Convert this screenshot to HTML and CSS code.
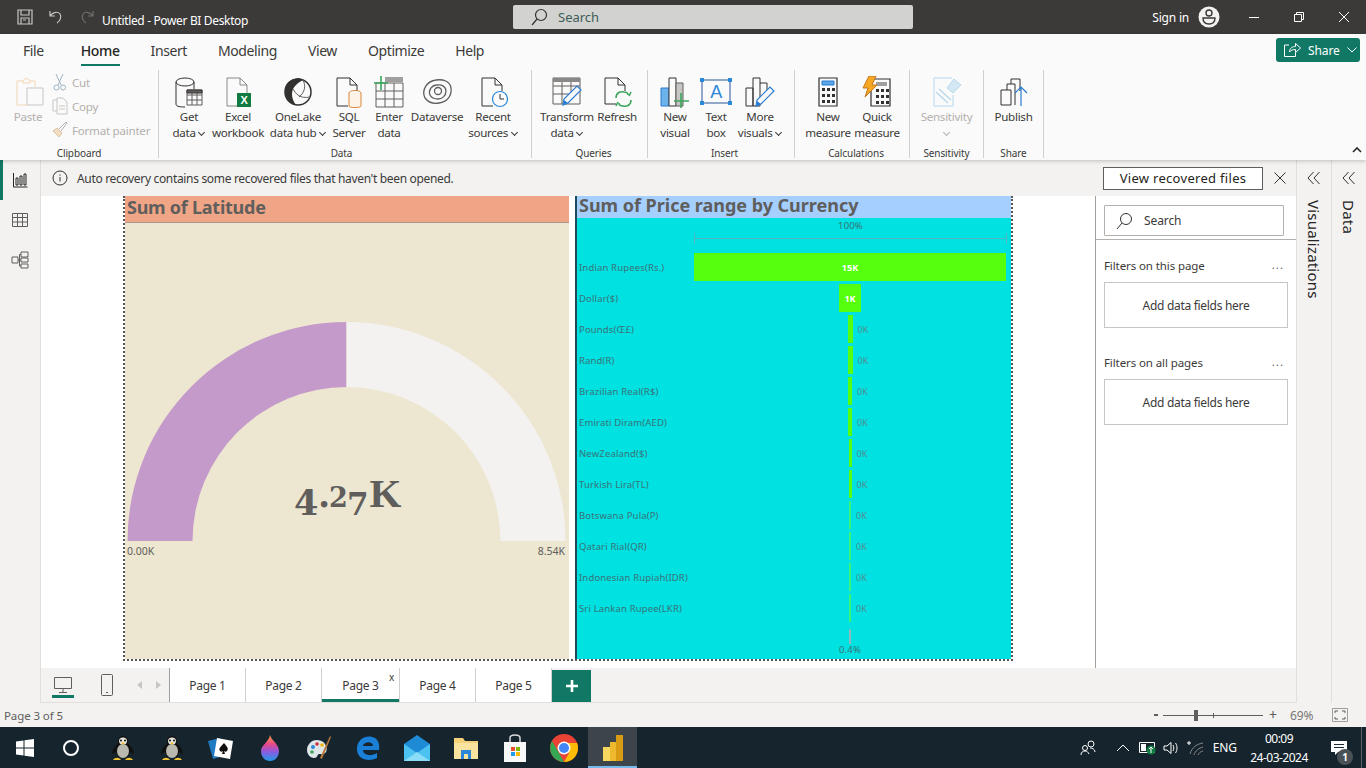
FILE: index.html
```html
<!DOCTYPE html>
<html lang="en">
<head>
    <meta charset="UTF-8">
    <meta name="viewport" content="width=device-width, initial-scale=1.0">
    <title>Untitled - Power BI Desktop</title>
    <link rel="stylesheet" href="styles.css">
</head>
<body>
    <!-- Title bar -->
    <header class="titlebar">
        <div class="quick-icons">
            <svg width="18" height="18" viewBox="0 0 18 18" fill="none" stroke="#c8c6c4" stroke-width="1.2"><path d="M2 2h14v14H2zM5 2v5h8V2M5 16v-6h8v6M7 12h3"/></svg>
            <svg width="18" height="18" viewBox="0 0 18 18" fill="none" stroke="#c8c6c4" stroke-width="1.2"><path d="M3 3v5h5M3 8c3-4 8-5 10-2 2 3 0 7-3 9"/></svg>
            <svg width="18" height="18" viewBox="0 0 18 18" fill="none" stroke="#6f6e6d" stroke-width="1.2"><path d="M15 3v5h-5M15 8c-3-4-8-5-10-2-2 3 0 7 3 9"/></svg>
        </div>
        <span class="doc-title">Untitled - Power BI Desktop</span>
        <div class="title-search">
            <svg width="18" height="18" viewBox="0 0 18 18" fill="none" stroke="#323130" stroke-width="1.2"><circle cx="11" cy="7" r="5.5"/><path d="M7 11l-5 6"/></svg>
            <span>Search</span>
        </div>
        <div class="title-right">
            <span class="sign-in">Sign in</span>
            <svg class="avatar" width="22" height="22" viewBox="0 0 22 22"><circle cx="11" cy="11" r="10.5" fill="#f3f2f1"/><circle cx="11" cy="7" r="3" fill="none" stroke="#3b3a39" stroke-width="1.4"/><path d="M5 12h12c0 4-2.5 6-6 6s-6-2-6-6z" fill="none" stroke="#3b3a39" stroke-width="1.4"/></svg>
            <div class="win-btn"><svg width="12" height="12" viewBox="0 0 12 12" stroke="#fff"><path d="M1 6.500h10"/></svg></div>
            <div class="win-btn"><svg width="12" height="12" viewBox="0 0 12 12" fill="none" stroke="#fff"><path d="M1.500 3.500h7v7h-7zM3.500 3.500v-2h7v7h-2"/></svg></div>
            <div class="win-btn"><svg width="12" height="12" viewBox="0 0 12 12" stroke="#fff"><path d="M1 1l10 10M11 1L1 11"/></svg></div>
        </div>
    </header>

    <!-- Ribbon -->
    <section class="ribbon">
        <nav class="ribbon-tabs">
            <span class="tab tab-file">File</span>
            <span class="tab tab-active">Home</span>
            <span class="tab">Insert</span>
            <span class="tab">Modeling</span>
            <span class="tab">View</span>
            <span class="tab">Optimize</span>
            <span class="tab">Help</span>
            <div class="share-btn">
                <svg width="18" height="16" viewBox="0 0 18 16" fill="none" stroke="#fff"><path d="M6 3H1.500v11.500h11V11M6.500 10c0-4 3-5.500 6-5.500V1.500l5 4.500-5 4.500V7.500c-2.500 0-4.500.5-6 2.500z"/></svg>
                <span>Share</span>
                <svg width="10" height="6" viewBox="0 0 10 6" fill="none" stroke="#fff"><path d="M.5.500L5 5l4.500-4.500"/></svg>
            </div>
        </nav>
        <div class="ribbon-groups">
            <div class="group group-clipboard">
                <div class="clipboard">
                    <div class="rb-btn paste disabled">
                        <svg width="32" height="32" viewBox="0 0 32 32" fill="none"><path d="M8 5H2v24h10" stroke="#f3d6b3"/><path d="M8 5c0-2 2-1 3-3 1 2 4 1 4 3v2H8zM15 5h5v6" stroke="#f3d6b3"/><path d="M12 12h16v17H12z" stroke="#c8c6c4" fill="#fafafa"/></svg>
                        <span>Paste</span>
                    </div>
                    <div class="small-list disabled">
                        <div class="small-btn"><svg width="16" height="18" viewBox="0 0 16 18" fill="none" stroke="#9fb4c4"><path d="M4 1l5 11M11 1L6 12"/><circle cx="4.500" cy="14.500" r="2.500"/><circle cx="11" cy="14.500" r="2.500"/></svg><span>Cut</span></div>
                        <div class="small-btn"><svg width="16" height="18" viewBox="0 0 16 18" fill="none" stroke="#c8c6c4"><path d="M5 3H1v11h4M5 1h6l4 4v12H5zM7 9h6M7 12h6"/></svg><span>Copy</span></div>
                        <div class="small-btn"><svg width="16" height="18" viewBox="0 0 16 18" fill="none"><path d="M1 10l6 6 3-4-5-5z" fill="#f4dcc0" stroke="#d8c4a8"/><path d="M7 8l7-7 1 1-6 8" stroke="#b3b0ad"/></svg><span>Format painter</span></div>
                    </div>
                </div>
                <div class="group-label">Clipboard</div>
            </div>

            <div class="group group-data">
                <div class="btn-grid">
                    <div class="rb-btn">
                        <svg width="30" height="32" viewBox="0 0 30 32" fill="none" stroke="#323130"><ellipse cx="11" cy="6" rx="9" ry="4"/><path d="M2 6v22c0 2 2 3 9 3M20 6v7"/><path d="M13 14h15v15H13zM13 19h15M13 24h15M18 14v15M23 14v15" stroke="#605e5c"/><path d="M13 14h15v3H13z" fill="#605e5c"/></svg>
                        <span>Get<br>data <i class="caret"></i></span>
                    </div>
                    <div class="rb-btn">
                        <svg width="30" height="32" viewBox="0 0 30 32" fill="none"><path d="M4 2h13l7 7v21H4zM17 2v7h7" stroke="#8a8886"/><path d="M14 17h14v14H14z" fill="#107c41"/><text x="21" y="28" class="svg-x">X</text></svg>
                        <span>Excel<br>workbook</span>
                    </div>
                    <div class="rb-btn">
                        <svg width="32" height="32" viewBox="0 0 32 32" fill="none"><circle cx="16" cy="16" r="13" stroke="#323130" stroke-width="1.500"/><path d="M13 3C6 4 2 10 3 17c1 7 6 11 11 12-4-5-5-11-3-16 2-4 6-7 10-9-3-2-6-2-8-1z" fill="#323130"/><path d="M11 13c3 5 7 10 17 8M21 4c3 6 2 12-4 17" stroke="#605e5c"/></svg>
                        <span>OneLake<br>data hub <i class="caret"></i></span>
                    </div>
                    <div class="rb-btn">
                        <svg width="30" height="32" viewBox="0 0 30 32" fill="none"><path d="M3 2h13l7 7v6M3 2v28h11M16 2v7h7" stroke="#323130"/><ellipse cx="21" cy="17" rx="6" ry="2.500" stroke="#d8893a"/><path d="M15 17v13c0 2 12 2 12 0V17" stroke="#d8893a" fill="#fdf3e7"/></svg>
                        <span>SQL<br>Server</span>
                    </div>
                    <div class="rb-btn">
                        <svg width="32" height="32" viewBox="0 0 32 32" fill="none"><path d="M3 7h27v24H3zM3 15h27M3 23h27M12 7v24M21 7v24" stroke="#605e5c"/><path d="M12 1h18v5H12z" fill="#a19f9d"/><path d="M8 0v14M1 7h14" stroke="#3ba55c" stroke-width="1.600"/></svg>
                        <span>Enter<br>data</span>
                    </div>
                    <div class="rb-btn">
                        <svg width="32" height="32" viewBox="0 0 32 32" fill="none" stroke="#605e5c" stroke-width="1.300"><path d="M4 22C0 14 6 5 15 4c7-1 14 1 15 8 1 8-4 14-12 15-6 1-11-1-14-5z"/><path d="M9 19c-2-5 2-10 7-10 5-1 9 2 9 6 0 5-4 8-8 8-4 0-7-2-8-4z"/><circle cx="17" cy="15" r="3.500"/></svg>
                        <span>Dataverse</span>
                    </div>
                    <div class="rb-btn">
                        <svg width="30" height="32" viewBox="0 0 30 32" fill="none"><path d="M4 2h13l7 7v6M4 2v28h11M17 2v7h7" stroke="#323130"/><circle cx="22" cy="23" r="7.500" fill="#fafafa" stroke="#2b88d8" stroke-width="1.200"/><path d="M22 18v5h4" stroke="#323130"/></svg>
                        <span>Recent<br>sources <i class="caret"></i></span>
                    </div>
                </div>
                <div class="group-label label-data">Data</div>
            </div>

            <div class="group group-queries">
                <div class="btn-grid">
                    <div class="rb-btn">
                        <svg width="32" height="32" viewBox="0 0 32 32" fill="none"><path d="M2 2h27v26H2zM2 10h27M2 18h20M11 2v26M20 2v18" stroke="#605e5c"/><path d="M2 2h27v4H2z" fill="#8a8886"/><path d="M12 29l1-6L26 10l4 4-13 13z" fill="#fafafa" stroke="#2b7cd3" stroke-width="1.200"/><path d="M12 29l1-5 4 3z" fill="#2b7cd3"/></svg>
                        <span>Transform<br>data <i class="caret"></i></span>
                    </div>
                    <div class="rb-btn">
                        <svg width="30" height="32" viewBox="0 0 30 32" fill="none"><path d="M3 2h13l7 7v6M3 2v26h11M16 2v7h7" stroke="#323130"/><path d="M14 22c0-5 4-7 8-6 2 0 4 1 4 3M29 24c0 5-4 7-8 6-2 0-4-1-4-3" stroke="#3ba55c" stroke-width="1.600"/><path d="M27 20l2-4M16 26l-2 4" stroke="#3ba55c" stroke-width="1.600"/></svg>
                        <span>Refresh</span>
                    </div>
                </div>
                <div class="group-label">Queries</div>
            </div>

            <div class="group group-insert">
                <div class="btn-grid">
                    <div class="rb-btn">
                        <svg width="32" height="32" viewBox="0 0 32 32" fill="none"><path d="M2 12h8v18H2z" fill="#6cb2eb" stroke="#2b7cd3"/><path d="M10 2h7v28h-7z" stroke="#323130" fill="#fafafa"/><path d="M17 7h7v23h-7z" fill="#c8c6c4" stroke="#605e5c"/><path d="M22 17v15M15 25h15" stroke="#3ba55c" stroke-width="1.600"/></svg>
                        <span>New<br>visual</span>
                    </div>
                    <div class="rb-btn">
                        <svg width="34" height="32" viewBox="0 0 34 32" fill="none"><path d="M3 4h28v23H3z" stroke="#2b579a"/><path d="M1 2h4v4H1zM29 2h4v4h-4zM1 25h4v4H1zM29 25h4v4h-4z" fill="#2b88d8"/><text x="17" y="22" class="svg-a">A</text></svg>
                        <span>Text<br>box</span>
                    </div>
                    <div class="rb-btn">
                        <svg width="32" height="32" viewBox="0 0 32 32" fill="none"><path d="M2 12h7v18H2zM9 2h7v28H9zM16 7h7v10" stroke="#323130"/><path d="M12 30l1-6L26 11l4 4-13 13z" fill="#fafafa" stroke="#2b7cd3" stroke-width="1.200"/><path d="M12 30l1-5 4 3z" fill="#2b7cd3"/></svg>
                        <span>More<br>visuals <i class="caret"></i></span>
                    </div>
                </div>
                <div class="group-label">Insert</div>
            </div>

            <div class="group group-calc">
                <div class="btn-grid">
                    <div class="rb-btn">
                        <svg width="24" height="32" viewBox="0 0 24 32" fill="none"><path d="M3 2h18v28H3z" stroke="#323130" stroke-width="1.200"/><path d="M6 5h12v4H6z" fill="#5ba6e6" stroke="#2b7cd3"/><path d="M6 12h3v3H6zM11 12h3v3h-3zM16 12h3v3h-3zM6 18h3v3H6zM11 18h3v3h-3zM16 18h3v3h-3zM6 24h3v3H6zM11 24h3v3h-3zM16 24h3v3h-3z" fill="#323130"/></svg>
                        <span>New<br>measure</span>
                    </div>
                    <div class="rb-btn">
                        <svg width="30" height="32" viewBox="0 0 30 32" fill="none"><path d="M9 3h19v27H9z" stroke="#323130" stroke-width="1.200"/><path d="M14 6h11v4H14z" fill="#a19f9d"/><path d="M14 13h3v3h-3zM19 13h3v3h-3zM24 13h3v3h-3zM14 19h3v3h-3zM19 19h3v3h-3zM24 19h3v3h-3zM14 25h3v3h-3zM19 25h3v3h-3zM24 25h3v3h-3z" fill="#323130"/><path d="M7 0h7l-4 9h5L3 21l3-9H1z" fill="#f7a823" stroke="#c2761b"/></svg>
                        <span>Quick<br>measure</span>
                    </div>
                </div>
                <div class="group-label">Calculations</div>
            </div>

            <div class="group group-sens">
                <div class="btn-grid">
                    <div class="rb-btn disabled">
                        <svg width="32" height="32" viewBox="0 0 32 32" fill="none" stroke="#b8d8ec"><path d="M3 2h18M3 2v28h19V19"/><path d="M5 16L17 27M8 13l12 11" stroke-width="1.500"/><path d="M16 12l7-9 7 6-8 8z" fill="#d4e8f4"/></svg>
                        <span>Sensitivity<br><i class="caret"></i></span>
                    </div>
                </div>
                <div class="group-label">Sensitivity</div>
            </div>

            <div class="group group-share">
                <div class="btn-grid">
                    <div class="rb-btn">
                        <svg width="32" height="32" viewBox="0 0 32 32" fill="none"><path d="M3 14h10v15H3zM9 14V8h8v21M17 4v0M13 8V3h9v12" stroke="#323130" stroke-linejoin="round"/><path d="M23 30V11M17 17l6-6 6 6" stroke="#2b7cd3" stroke-width="1.200"/></svg>
                        <span>Publish</span>
                    </div>
                </div>
                <div class="group-label">Share</div>
            </div>
        </div>
        <svg class="ribbon-collapse" width="10" height="6" viewBox="0 0 10 6" fill="none" stroke="#252423" stroke-width="1.600"><path d="M1 5l4-4 4 4"/></svg>
    </section>

    <!-- Main area -->
    <div class="middle">
        <aside class="rail">
            <div class="rail-item rail-active">
                <svg width="16" height="16" viewBox="0 0 16 16" fill="none" stroke="#252423"><path d="M1.500 1v14h14M4 13V6h2v7zM8 13V4h2v9zM12 13V2h2v11z"/></svg>
            </div>
            <div class="rail-item">
                <svg width="18" height="16" viewBox="0 0 18 16" fill="none" stroke="#605e5c"><path d="M1.500 1.500h15v13h-15zM1.500 5.500h15M1.500 10h15M6.500 1.500v13M11.500 1.500v13"/></svg>
            </div>
            <div class="rail-item">
                <svg width="18" height="18" viewBox="0 0 18 18" fill="none" stroke="#605e5c"><path d="M1 6h6v6H1zM10 1h7v5h-7zM10 7h7v4h-7zM10 13h7v4h-7zM7 9h3M8.500 3.500h1.500M8.500 3.500V15H10"/></svg>
            </div>
        </aside>

        <div class="center">
            <div class="message-bar">
                <svg width="16" height="16" viewBox="0 0 16 16" fill="none" stroke="#323130"><circle cx="8" cy="8" r="7"/><path d="M8 7v4.500M8 4.500v1.200"/></svg>
                <span class="message-text">Auto recovery contains some recovered files that haven't been opened.</span>
                <div class="message-btn">View recovered files</div>
                <svg width="12" height="12" viewBox="0 0 12 12" stroke="#323130"><path d="M.5.500l11 11M11.500.500l-11 11"/></svg>
            </div>

            <div class="work">
                <div class="canvas">
                    <div class="report">
                        <!-- Gauge visual -->
                        <div class="visual gauge">
                            <div class="visual-title gauge-title">Sum of Latitude</div>
                            <svg class="gauge-svg" width="444" height="436" viewBox="0 0 444 436">
                                <path d="M2.500 318A219 219 0 0 1 221.500 99V164A154 154 0 0 0 67.500 318Z" fill="#c49aca"/>
                                <path d="M221.500 99A219 219 0 0 1 440.500 318H375.500A154 154 0 0 0 221.500 164Z" fill="#f3f2f1"/>
                                <text class="gauge-value"><tspan x="169" y="292" class="g-tall">4</tspan><tspan x="193" y="284" class="g-tall">.</tspan><tspan x="204" y="284" class="g-small">2</tspan><tspan x="222" y="292" class="g-seven">7</tspan><tspan x="244.500" y="284" class="g-cap">K</tspan></text>
                                <text x="2" y="332" class="gauge-label">0.00K</text>
                                <text x="440" y="332" text-anchor="end" class="gauge-label">8.54K</text>
                            </svg>
                        </div>

                        <!-- Funnel visual -->
                        <div class="visual funnel">
                            <div class="visual-title funnel-title">Sum of Price range by Currency</div>
                            <div class="funnel-body">
                                <div class="funnel-top">
                                    <span>100%</span>
                                    <div class="funnel-scale"></div>
                                </div>
                                <div class="funnel-row"><span class="funnel-name">Indian Rupees(Rs.)</span><div class="funnel-track"><div class="funnel-bar" style="width:312px"><span class="in-bar">15K</span></div></div></div>
                                <div class="funnel-row"><span class="funnel-name">Dollar($)</span><div class="funnel-track"><div class="funnel-bar" style="width:22px"><span class="in-bar">1K</span></div></div></div>
                                <div class="funnel-row"><span class="funnel-name">Pounds(Œ£)</span><div class="funnel-track"><div class="funnel-bar" style="width:5px"><span class="off-bar">0K</span></div></div></div>
                                <div class="funnel-row"><span class="funnel-name">Rand(R)</span><div class="funnel-track"><div class="funnel-bar" style="width:5px"><span class="off-bar">0K</span></div></div></div>
                                <div class="funnel-row"><span class="funnel-name">Brazilian Real(R$)</span><div class="funnel-track"><div class="funnel-bar" style="width:4px"><span class="off-bar">0K</span></div></div></div>
                                <div class="funnel-row"><span class="funnel-name">Emirati Diram(AED)</span><div class="funnel-track"><div class="funnel-bar" style="width:4px"><span class="off-bar">0K</span></div></div></div>
                                <div class="funnel-row"><span class="funnel-name">NewZealand($)</span><div class="funnel-track"><div class="funnel-bar" style="width:3px"><span class="off-bar">0K</span></div></div></div>
                                <div class="funnel-row"><span class="funnel-name">Turkish Lira(TL)</span><div class="funnel-track"><div class="funnel-bar" style="width:3px"><span class="off-bar">0K</span></div></div></div>
                                <div class="funnel-row"><span class="funnel-name">Botswana Pula(P)</span><div class="funnel-track"><div class="funnel-bar fade" style="width:2px"><span class="off-bar">0K</span></div></div></div>
                                <div class="funnel-row"><span class="funnel-name">Qatari Rial(QR)</span><div class="funnel-track"><div class="funnel-bar fade" style="width:2px"><span class="off-bar">0K</span></div></div></div>
                                <div class="funnel-row"><span class="funnel-name">Indonesian Rupiah(IDR)</span><div class="funnel-track"><div class="funnel-bar fade" style="width:2px"><span class="off-bar">0K</span></div></div></div>
                                <div class="funnel-row"><span class="funnel-name">Sri Lankan Rupee(LKR)</span><div class="funnel-track"><div class="funnel-bar fade" style="width:2px"><span class="off-bar">0K</span></div></div></div>
                                <div class="funnel-bottom">
                                    <div class="funnel-tick"></div>
                                    <span>0.4%</span>
                                </div>
                            </div>
                        </div>
                    </div>
                </div>

                <!-- Filters pane -->
                <aside class="filters">
                    <div class="filter-search-wrap">
                        <div class="filter-search">
                            <svg width="18" height="18" viewBox="0 0 18 18" fill="none" stroke="#323130"><circle cx="11" cy="7" r="5.500"/><path d="M7 11l-5 6"/></svg>
                            <span>Search</span>
                        </div>
                    </div>
                    <div class="filter-head"><span>Filters on this page</span><span class="dots">...</span></div>
                    <div class="filter-card">Add data fields here</div>
                    <div class="filter-head filter-head-2"><span>Filters on all pages</span><span class="dots">...</span></div>
                    <div class="filter-card">Add data fields here</div>
                </aside>
            </div>

            <!-- Page tabs -->
            <div class="page-bar">
                <div class="view-btn view-active">
                    <svg width="20" height="18" viewBox="0 0 20 18" fill="none" stroke="#605e5c"><path d="M1.500 1.500h17v11h-17zM10 12.500v3.500M6 16.500h8"/></svg>
                </div>
                <div class="view-btn">
                    <svg width="12" height="22" viewBox="0 0 12 22" fill="none" stroke="#605e5c"><rect x=".5" y=".5" width="11" height="21" rx="1"/><path d="M5 18.500h2"/></svg>
                </div>
                <div class="page-arrows">
                    <svg width="6" height="8" viewBox="0 0 6 8" fill="#c8c6c4"><path d="M5 0v8L0 4z"/></svg>
                    <svg width="6" height="8" viewBox="0 0 6 8" fill="#c8c6c4"><path d="M1 0v8l5-4z"/></svg>
                </div>
                <div class="page-tabs">
                    <div class="page-tab">Page 1</div>
                    <div class="page-tab">Page 2</div>
                    <div class="page-tab page-active">Page 3<span class="page-close">x</span></div>
                    <div class="page-tab">Page 4</div>
                    <div class="page-tab">Page 5</div>
                </div>
                <div class="page-add">
                    <svg width="12" height="12" viewBox="0 0 12 12" stroke="#fff" stroke-width="2.600"><path d="M6 0v12M0 6h12"/></svg>
                </div>
            </div>
        </div>

        <aside class="side-pane">
            <svg width="14" height="14" viewBox="0 0 14 14" fill="none" stroke="#323130"><path d="M6.500 1L1 7l5.500 6M12.500 1L7 7l5.500 6"/></svg>
            <span>Visualizations</span>
        </aside>
        <aside class="side-pane">
            <svg width="14" height="14" viewBox="0 0 14 14" fill="none" stroke="#323130"><path d="M6.500 1L1 7l5.500 6M12.500 1L7 7l5.500 6"/></svg>
            <span>Data</span>
        </aside>
    </div>

    <!-- Status bar -->
    <footer class="statusbar">
        <span class="page-count">Page 3 of 5</span>
        <div class="zoom">
            <span class="zoom-minus"></span>
            <div class="zoom-slider"><i class="zoom-thumb"></i><i class="zoom-tick"></i></div>
            <span class="zoom-plus">+</span>
            <span class="zoom-pct">69%</span>
            <svg width="16" height="14" viewBox="0 0 16 14" fill="none" stroke="#605e5c"><path d="M.5.500h15v13H.5z" stroke="#a19f9d"/><path d="M3 5V3h3M10 3h3v2M13 9v2h-3M6 11H3V9"/></svg>
        </div>
    </footer>

    <!-- Windows taskbar -->
    <div class="taskbar">
        <div class="task-icon"><svg width="18" height="18" viewBox="0 0 18 18" fill="#fff"><path d="M0 2.500l7.500-1V8.500H0zM8.500 1.300L18 0v8.500H8.500zM0 9.500h7.500v7L0 15.500zM8.500 9.500H18V18l-9.500-1.300z"/></svg></div>
        <div class="task-icon task-cortana"><svg width="18" height="18" viewBox="0 0 18 18" fill="none" stroke="#fff" stroke-width="2"><circle cx="9" cy="9" r="7"/></svg></div>
        <div class="task-icon"><svg width="26" height="26" viewBox="0 0 26 26"><path d="M13 1c4 0 5 3 5 7 2 3 6 6 6 11l-4-2-2 5H8l-2-5-4 2c0-5 4-8 6-11 0-4 1-7 5-7z" fill="#111"/><ellipse cx="13" cy="6" rx="4" ry="3.500" fill="#e6e6dc"/><ellipse cx="13" cy="16" rx="6" ry="7" fill="#b9b9b0"/><circle cx="11" cy="5.500" r="1" fill="#111"/><circle cx="15" cy="5.500" r="1" fill="#111"/><path d="M11.500 7.500h3L13 10z" fill="#f2b705"/><path d="M3 25c2-3 6-3 8 0zM15 25c2-3 6-3 8 0z" fill="#f2c230"/></svg></div>
        <div class="task-icon"><svg width="26" height="26" viewBox="0 0 26 26"><path d="M13 1c4 0 5 3 5 7 2 3 6 6 6 11l-4-2-2 5H8l-2-5-4 2c0-5 4-8 6-11 0-4 1-7 5-7z" fill="#111"/><ellipse cx="13" cy="6" rx="4" ry="3.500" fill="#e6e6dc"/><ellipse cx="13" cy="16" rx="6" ry="7" fill="#b9b9b0"/><circle cx="11" cy="5.500" r="1" fill="#111"/><circle cx="15" cy="5.500" r="1" fill="#111"/><path d="M11.500 7.500h3L13 10z" fill="#f2b705"/><path d="M3 25c2-3 6-3 8 0zM15 25c2-3 6-3 8 0z" fill="#f2c230"/></svg></div>
        <div class="task-icon"><svg width="26" height="24" viewBox="0 0 26 24"><path d="M0 5l12-3 3 18-10 3z" fill="#1f7ac4"/><path d="M9 2l16 3-3 18-16-3z" fill="#fff"/><path d="M16 7c3 4 5 5 3 8-1 1-2 1-3 0l1 3h-3l1-3c-1 1-2 1-3 0-2-3 1-4 4-8z" fill="#111"/></svg></div>
        <div class="task-icon"><svg width="18" height="26" viewBox="0 0 18 26"><defs><linearGradient id="drop" x1="0" y1="0" x2="0" y2="1"><stop offset="0" stop-color="#f7a23b"/><stop offset=".35" stop-color="#e8488a"/><stop offset=".65" stop-color="#8a5be0"/><stop offset="1" stop-color="#1f9be8"/></linearGradient></defs><path d="M9 0c1 5 9 9 9 16 0 6-4 10-9 10s-9-4-9-10C0 10 8 7 9 0z" fill="url(#drop)"/></svg></div>
        <div class="task-icon"><svg width="26" height="26" viewBox="0 0 26 26"><path d="M11 5C5 5 1 10 1 15s4 8 7 8c4 0 3-4 5-4s5 1 7-2 0-12-9-12z" fill="#dfe6ea"/><circle cx="7" cy="12" r="2" fill="#2b88d8"/><circle cx="11" cy="9" r="1.800" fill="#d13438"/><circle cx="16" cy="10" r="1.800" fill="#f2b705"/><circle cx="6" cy="17" r="1.800" fill="#3ba55c"/><path d="M24 1l1 1-9 22-2-1z" fill="#b5763a"/></svg></div>
        <div class="task-icon"><svg width="24" height="26" viewBox="0 0 24 26"><path d="M23 15H7c0 5 8 7 14 3v5c-8 4-20 2-20-9C1 4 10 0 16 2c6 1 8 7 7 13zM7 11h10c0-5-9-5-10 0z" fill="#1a7fd6"/></svg></div>
        <div class="task-icon"><svg width="26" height="26" viewBox="0 0 26 26"><path d="M13 0l13 9v17H0V9z" fill="#1f8ad6"/><path d="M0 9l13 9 13-9v17H0z" fill="#4cc2f1"/><path d="M0 26l13-9 13 9z" fill="#8adcf7"/></svg></div>
        <div class="task-icon"><svg width="26" height="24" viewBox="0 0 26 24"><path d="M1 2h9l2 3h13v18H1z" fill="#f5d27a"/><path d="M1 7h24v16H1z" fill="#fae39f"/><path d="M8 14h10v9h-3v-5h-4v5H8z" fill="#2b88d8"/></svg></div>
        <div class="task-icon"><svg width="26" height="28" viewBox="0 0 26 28"><path d="M2 8h22v20H2z" fill="#f8f8f8"/><path d="M8 8V4c0-4 10-4 10 0v4" fill="none" stroke="#d8d8d8" stroke-width="1.500"/><path d="M9 13h4v4H9z" fill="#e8502a"/><path d="M14 13h4v4h-4z" fill="#7db900"/><path d="M9 18h4v4H9z" fill="#1f9be8"/><path d="M14 18h4v4h-4z" fill="#f7b900"/></svg></div>
        <div class="task-icon"><svg width="28" height="28" viewBox="0 0 28 28"><circle cx="14" cy="14" r="14" fill="#ea4335"/><path d="M14 28A14 14 0 0 1 2 7l7 12z" fill="#34a853"/><path d="M14 28c8 0 14-6 14-14 0-2-.5-4-1-5H14l5 10z" fill="#fbbc05"/><circle cx="14" cy="14" r="6.500" fill="#fff"/><circle cx="14" cy="14" r="5" fill="#4285f4"/></svg></div>
        <div class="task-icon task-active"><svg width="20" height="26" viewBox="0 0 20 26"><path d="M0 12h7v14H0z" fill="#f6d860"/><path d="M7 7h6v19H7z" fill="#eeb92c"/><path d="M13 0h7v26h-7z" fill="#d99a14"/></svg></div>
        <div class="tray">
            <svg class="tray-people" width="16" height="16" viewBox="0 0 16 16" fill="none" stroke="#fff"><circle cx="11" cy="4" r="3"/><circle cx="5" cy="8" r="2.500"/><path d="M1 15c0-3 2-4 4-4s3 1 4 3M10 8c2 0 5 1 5 4"/></svg>
            <svg class="tray-caret" width="14" height="8" viewBox="0 0 14 8" fill="none" stroke="#fff"><path d="M1 7l6-6 6 6"/></svg>
            <svg class="tray-batt" width="18" height="14" viewBox="0 0 18 14"><path d="M.5 1.500h15v10H.5z" fill="none" stroke="#fff"/><path d="M2 3h5v7H2z" fill="#fff"/><circle cx="12" cy="9" r="4.500" fill="#107c41"/><path d="M12 6v6M10 8l2-2 2 2" stroke="#fff" fill="none"/></svg>
            <svg class="tray-vol" width="17" height="14" viewBox="0 0 17 14" fill="none" stroke="#fff"><path d="M1 5h3l4-3.500v11L4 9H1zM10 4c1 2 1 4 0 6M12.500 2c2 3 2 7 0 10"/></svg>
            <svg class="tray-wifi" width="18" height="16" viewBox="0 0 18 16" fill="none" stroke="#8a8886"><path d="M3 14c2-7 7-10 13-11M7 15c1-4 5-7 9-8M11 15c1-2 3-4 5-4"/><path d="M2 1v4M0 3h4" stroke="#fff"/></svg>
            <span class="tray-lang">ENG</span>
            <div class="clock"><span>00:09</span><span>24-03-2024</span></div>
            <div class="notif">
                <svg width="16" height="14" viewBox="0 0 16 14" fill="#fff"><path d="M0 0h16v11H7l-3 3v-3H0z"/><path d="M3 3.500h10M3 6.500h10" stroke="#1b2a33"/></svg>
                <span class="notif-badge">1</span>
            </div>
        </div>
    </div>
</body>
</html>
```

FILE: styles.css
```css
/* Page */
html, body {
    height: 100%;
}

body {
    margin: 0;
    width: 1366px;
    height: 768px;
    overflow: hidden;
    display: flex;
    flex-direction: column;
    font-family: "Noto Sans", "Open Sans", sans-serif;
    font-size: 12px;
    color: #252423;
    background-color: #f3f2f1;
}

svg {
    display: block;
    flex: none;
}

/* Title bar */
.titlebar {
    height: 34px;
    flex: none;
    display: flex;
    align-items: center;
    background-color: #3b3a39;
    color: #fff;
    position: relative;
}

.quick-icons {
    display: flex;
    gap: 13px;
    padding-left: 16px;
    width: 86px;
}

.doc-title {
    font-size: 12px;
    letter-spacing: -0.35px;
    width: 411px;
    padding-top: 6px;
}

.title-search {
    width: 400px;
    height: 24px;
    display: flex;
    align-items: center;
    gap: 10px;
    padding-left: 17px;
    box-sizing: border-box;
    background-color: #d2d2d0;
    border-radius: 2px;
    color: #3f5d57;
    font-size: 13px;
}

.title-right {
    margin-left: auto;
    display: flex;
    align-items: center;
}

.sign-in {
    font-size: 12px;
    letter-spacing: -0.2px;
}

.avatar {
    margin-left: 9px;
    margin-right: 11px;
}

.win-btn {
    width: 45px;
    display: flex;
    justify-content: center;
}

/* Ribbon */
.ribbon {
    height: 126px;
    flex: none;
    position: relative;
    z-index: 2;
    background-color: #fafafa;
    box-shadow: 0 1px 4px rgba(0, 0, 0, 0.22);
}

.ribbon-tabs {
    height: 34px;
    box-sizing: border-box;
    padding: 0 0 2px 23px;
    display: flex;
    align-items: center;
    gap: 31px;
    font-size: 14px;
    letter-spacing: -0.4px;
    color: #3b3a39;
}

.tab-file {
    margin-right: 6px;
}

.tab {
    position: relative;
}

.tab-active {
    color: #252423;
    font-weight: 500;
}

.tab-active::after {
    content: "";
    position: absolute;
    left: 0;
    right: 0;
    bottom: -6px;
    height: 2px;
    background-color: #117865;
}

.share-btn {
    margin-left: auto;
    margin-right: 6px;
    width: 84px;
    height: 24px;
    display: flex;
    align-items: center;
    gap: 7px;
    padding-left: 7px;
    box-sizing: border-box;
    background-color: #117865;
    border-radius: 3px;
    color: #fff;
    font-size: 12px;
    letter-spacing: -0.1px;
}

.ribbon-groups {
    display: flex;
    margin-top: 2px;
}

.group {
    height: 88px;
    flex: none;
    box-sizing: border-box;
    border-right: 1px solid #d2d0ce;
    padding-top: 6px;
}

.group-clipboard { width: 159px; }
.group-data { width: 373px; padding-left: 7px; }
.group-queries { width: 116px; padding-left: 8px; }
.group-insert { width: 147px; padding-left: 7px; }
.group-calc { width: 115px; padding-left: 8px; }
.group-sens { width: 74px; }
.group-share { width: 60px; }

.btn-grid {
    height: 66px;
    display: grid;
}

.group-data .btn-grid { grid-template-columns: 46px 52px 68px 34px 46px 50px 62px; }
.group-queries .btn-grid { grid-template-columns: 54px 46px; }
.group-insert .btn-grid { grid-template-columns: 40px 42px 46px; }
.group-calc .btn-grid { grid-template-columns: 50px 48px; }

.rb-btn {
    display: flex;
    flex-direction: column;
    align-items: center;
    text-align: center;
    font-size: 11.6px;
    line-height: 16px;
    white-space: nowrap;
    letter-spacing: -0.28px;
    color: #3b3a39;
}

.rb-btn svg {
    height: 32px;
    margin-bottom: 1px;
}

.rb-btn.disabled,
.small-list.disabled {
    color: #b3b0ad;
}

/* Little chevron after a ribbon label */
.caret {
    display: inline-block;
    width: 4px;
    height: 4px;
    margin: 0 1px 2px 1px;
    border-right: 1px solid #3b3a39;
    border-bottom: 1px solid #3b3a39;
    transform: rotate(45deg);
}

.disabled .caret {
    border-color: #b3b0ad;
}

.group-label {
    margin-top: 4px;
    text-align: center;
    font-size: 10px;
    line-height: 14px;
    letter-spacing: -0.1px;
    color: #3b3a39;
    white-space: nowrap;
}

.label-data {
    padding-right: 14px;
}

.clipboard {
    height: 66px;
    display: flex;
}

.paste {
    width: 56px;
}

.paste svg {
    margin-left: 6px;
}

.small-list {
    display: flex;
    flex-direction: column;
    gap: 6px;
    margin-top: -3px;
    margin-left: -4px;
}

.small-btn {
    height: 18px;
    display: flex;
    align-items: center;
    gap: 4px;
    white-space: nowrap;
    font-size: 11.6px;
    letter-spacing: -0.25px;
}

.ribbon-collapse {
    position: absolute;
    right: 4px;
    bottom: 7px;
}

/* Main area */
.middle {
    height: 543px;
    flex: none;
    display: flex;
}

.rail {
    width: 41px;
    flex: none;
    box-sizing: border-box;
    border-right: 1px solid #e1dfdd;
}

.rail-item {
    height: 40px;
    display: flex;
    align-items: center;
    justify-content: center;
}

.rail-active {
    box-shadow: inset 3px 0 0 #117865;
}

.center {
    width: 1255px;
    flex: none;
    display: flex;
    flex-direction: column;
}

.message-bar {
    height: 36px;
    flex: none;
    display: flex;
    align-items: center;
    padding-left: 11px;
}

.message-text {
    margin-left: 9px;
    width: 1025px;
    flex: none;
    font-size: 12px;
    letter-spacing: -0.33px;
    color: #3b3a39;
}

.message-btn {
    width: 160px;
    height: 23px;
    flex: none;
    margin-right: 11px;
    box-sizing: border-box;
    border: 1px solid #605e5c;
    background-color: #fff;
    text-align: center;
    line-height: 21px;
    font-size: 13px;
    letter-spacing: 0.3px;
    margin-left: 1px;
}

.work {
    height: 472px;
    flex: none;
    display: flex;
}

/* Report canvas */
.canvas {
    width: 1054px;
    flex: none;
    box-sizing: border-box;
    background-color: #fff;
    padding-left: 82px;
}

.report {
    width: 890px;
    height: 465px;
    box-sizing: border-box;
    border: 2px dotted #555;
    border-top: 0;
    display: flex;
    gap: 6px;
}

.visual {
    display: flex;
    flex-direction: column;
}

.visual-title {
    font-weight: 700;
    font-size: 18px;
    color: #605e5c;
    white-space: nowrap;
    flex: none;
}

.gauge {
    width: 444px;
    flex: none;
    background-color: #ede6d0;
}

.gauge-title {
    height: 27px;
    line-height: 22px;
    padding-left: 2px;
    letter-spacing: -0.25px;
    box-sizing: border-box;
    background-color: #f0a586;
    border-bottom: 1px solid #a9988a;
}

/* The reference font has old-style figures, so each one gets its own size */
.gauge-value {
    font-family: "DejaVu Serif", serif;
    font-weight: 700;
    fill: #605e5c;
}

.g-tall {
    font-size: 35px;
}

.g-seven {
    font-size: 31px;
}

.g-small {
    font-size: 27px;
}

.g-cap {
    font-family: "Liberation Serif", serif;
    font-size: 41px;
}

.gauge-label {
    font-size: 10.5px;
    fill: #605e5c;
}

/* Funnel chart */
.funnel {
    width: 436px;
    flex: none;
    box-sizing: border-box;
    border-left: 2px solid #1e4b5c;
}

.funnel-title {
    height: 22px;
    line-height: 19px;
    padding-left: 2px;
    letter-spacing: -0.02px;
    background-color: #a5cfff;
}

.funnel-body {
    flex: 1;
    background-color: #00e1e1;
    color: #3a7378;
    font-size: 9.5px;
    letter-spacing: 0.15px;
    padding-left: 2px;
}

.funnel-top {
    margin-left: 115px;
    width: 313px;
    height: 35px;
    text-align: center;
    line-height: 15px;
}

.funnel-scale {
    height: 11px;
    box-sizing: border-box;
    border-left: 1px solid #4fb8bc;
    border-right: 1px solid #4fb8bc;
    position: relative;
}

.funnel-scale::after {
    content: "";
    position: absolute;
    left: 0;
    right: 0;
    top: 5px;
    height: 1px;
    background-color: #4fb8bc;
}

.funnel-row {
    height: 28px;
    margin-bottom: 3px;
    display: flex;
    align-items: center;
}

.funnel-name {
    width: 115px;
    flex: none;
    white-space: nowrap;
}

.funnel-track {
    width: 312px;
    height: 28px;
    display: flex;
    justify-content: center;
}

.funnel-bar {
    height: 28px;
    position: relative;
    background-color: #55ff0e;
    display: flex;
    align-items: center;
    justify-content: center;
}

.funnel-bar.fade {
    background-color: #38f57a;
}

.in-bar {
    color: #fff;
    font-weight: 700;
    font-size: 9px;
    letter-spacing: 0;
}

/* Small bars: value sits to the right of the bar */
.off-bar {
    position: absolute;
    left: calc(100% + 5px);
    top: 8px;
    font-size: 9px;
    letter-spacing: 0;
    color: #4f8f92;
}

.funnel-bottom {
    margin-left: 115px;
    width: 312px;
    text-align: center;
    line-height: 12px;
    padding-top: 4px;
}

.funnel-tick {
    width: 2px;
    height: 15px;
    margin: 0 auto;
    background-color: #8fb8bd;
}

/* Filters pane */
.filters {
    width: 201px;
    flex: none;
    box-sizing: border-box;
    border-left: 1px solid #a19f9d;
    background-color: #fff;
    padding: 0 8px;
}

.filter-search-wrap {
    height: 44px;
    margin: 0 -8px;
    padding: 9px 12px 0 8px;
    box-sizing: border-box;
    border-bottom: 1px solid #b3b0ad;
}

.filter-search {
    height: 31px;
    display: flex;
    align-items: center;
    gap: 11px;
    padding-left: 10px;
    box-sizing: border-box;
    border: 1px solid #b3b0ad;
    border-radius: 1px;
    letter-spacing: -0.1px;
    color: #3b3a39;
}

.filter-head {
    display: flex;
    justify-content: space-between;
    align-items: center;
    height: 16px;
    margin-top: 17px;
    margin-bottom: 9px;
    padding-right: 4px;
    font-size: 11.5px;
    letter-spacing: -0.1px;
    color: #3b3a39;
}

.filter-head-2 {
    margin-top: 26px;
}

.dots {
    color: #605e5c;
    letter-spacing: 1px;
    line-height: 8px;
}

.filter-card {
    height: 46px;
    box-sizing: border-box;
    border: 1px solid #c8c6c4;
    text-align: center;
    line-height: 46px;
    letter-spacing: -0.3px;
    color: #3b3a39;
}

/* Page tabs */
.page-bar {
    height: 35px;
    flex: none;
    display: flex;
    align-items: stretch;
    box-sizing: border-box;
    border-bottom: 1px solid #e1dfdd;
}

.view-btn {
    width: 44px;
    display: flex;
    align-items: center;
    justify-content: center;
    position: relative;
}

.view-active::after {
    content: "";
    position: absolute;
    left: 11px;
    right: 11px;
    bottom: 4px;
    height: 3px;
    background-color: #117865;
}

.page-arrows {
    width: 40px;
    display: flex;
    align-items: center;
    justify-content: space-between;
    padding: 0 8px;
    box-sizing: border-box;
}

.page-tabs {
    display: flex;
    border-left: 1px solid #a19f9d;
}

.page-tab {
    width: 76px;
    box-sizing: border-box;
    background-color: #fff;
    border-right: 1px solid #d2d0ce;
    text-align: center;
    line-height: 36px;
    letter-spacing: -0.3px;
    color: #3b3a39;
    position: relative;
}

.page-active {
    width: 78px;
    box-shadow: inset 0 -3px 0 #117865;
}

.page-close {
    position: absolute;
    top: 4px;
    right: 5px;
    font-size: 10px;
    line-height: 10px;
}

.page-add {
    width: 39px;
    margin-top: 2px;
    display: flex;
    align-items: center;
    justify-content: center;
    background-color: #117865;
}

/* Right panes */
.side-pane {
    width: 35px;
    flex: none;
    box-sizing: border-box;
    border-left: 1px solid #e1dfdd;
    display: flex;
    flex-direction: column;
    align-items: center;
    padding-top: 11px;
}

.side-pane span {
    writing-mode: vertical-rl;
    margin-top: 15px;
    font-size: 15px;
    letter-spacing: 0.2px;
    color: #252423;
}

/* Status bar */
.statusbar {
    height: 24px;
    flex: none;
    display: flex;
    align-items: center;
    justify-content: space-between;
    box-sizing: border-box;
    padding: 0 18px 0 4px;
    color: #605e5c;
    font-size: 11.5px;
    letter-spacing: -0.1px;
}

.zoom {
    display: flex;
    align-items: center;
}

.zoom-minus {
    width: 4px;
    height: 2px;
    background-color: #605e5c;
    margin-right: 5px;
}

.zoom-slider {
    width: 100px;
    height: 1px;
    background-color: #605e5c;
    position: relative;
}

.zoom-thumb {
    position: absolute;
    left: 31px;
    top: -5px;
    width: 4px;
    height: 11px;
    background-color: #605e5c;
}

.zoom-tick {
    position: absolute;
    left: 50px;
    top: -2px;
    width: 1px;
    height: 5px;
    background-color: #605e5c;
}

.zoom-plus {
    margin-left: 6px;
    font-size: 14px;
    line-height: 14px;
}

.zoom-pct {
    margin-left: 13px;
    width: 42px;
    font-size: 12px;
    color: #797775;
}

/* Windows taskbar */
.taskbar {
    height: 41px;
    flex: none;
    display: flex;
    background-color: #16252d;
    color: #fff;
}

.task-icon {
    width: 49px;
    flex: none;
    display: flex;
    align-items: center;
    justify-content: center;
    box-sizing: border-box;
}

.task-cortana {
    padding-right: 5px;
}

.task-active {
    background-color: #3d454a;
    box-shadow: inset 0 -2px 0 #76b9ed;
}

.tray {
    margin-left: auto;
    margin-right: 4px;
    height: 41px;
    display: flex;
    align-items: center;
    box-sizing: border-box;
    border-right: 1px solid #55636b;
}

.tray-people { margin-right: 20px; }
.tray-caret { margin-right: 9px; }
.tray-batt { margin-right: 6px; }
.tray-vol { margin-right: 7px; }
.tray-wifi { margin-right: 8px; }

.tray-lang {
    font-size: 12px;
    letter-spacing: -0.1px;
}

.clock {
    width: 76px;
    margin-left: 4px;
    display: flex;
    flex-direction: column;
    align-items: center;
    font-size: 12px;
    line-height: 19px;
    letter-spacing: -0.5px;
}

.notif {
    width: 44px;
    height: 41px;
    position: relative;
    display: flex;
    align-items: center;
    justify-content: center;
}

.notif-badge {
    position: absolute;
    right: 8px;
    bottom: 3px;
    width: 16px;
    height: 16px;
    border-radius: 50%;
    background-color: #4a5257;
    text-align: center;
    font-size: 10px;
    font-weight: 700;
    line-height: 16px;
}

/* Text inside svg icons */
.svg-x {
    font-family: "Liberation Sans", sans-serif;
    font-size: 11px;
    font-weight: 700;
    fill: #fff;
    text-anchor: middle;
}

.svg-a {
    font-family: "Liberation Sans", sans-serif;
    font-size: 18px;
    fill: #2b88d8;
    text-anchor: middle;
}
```
